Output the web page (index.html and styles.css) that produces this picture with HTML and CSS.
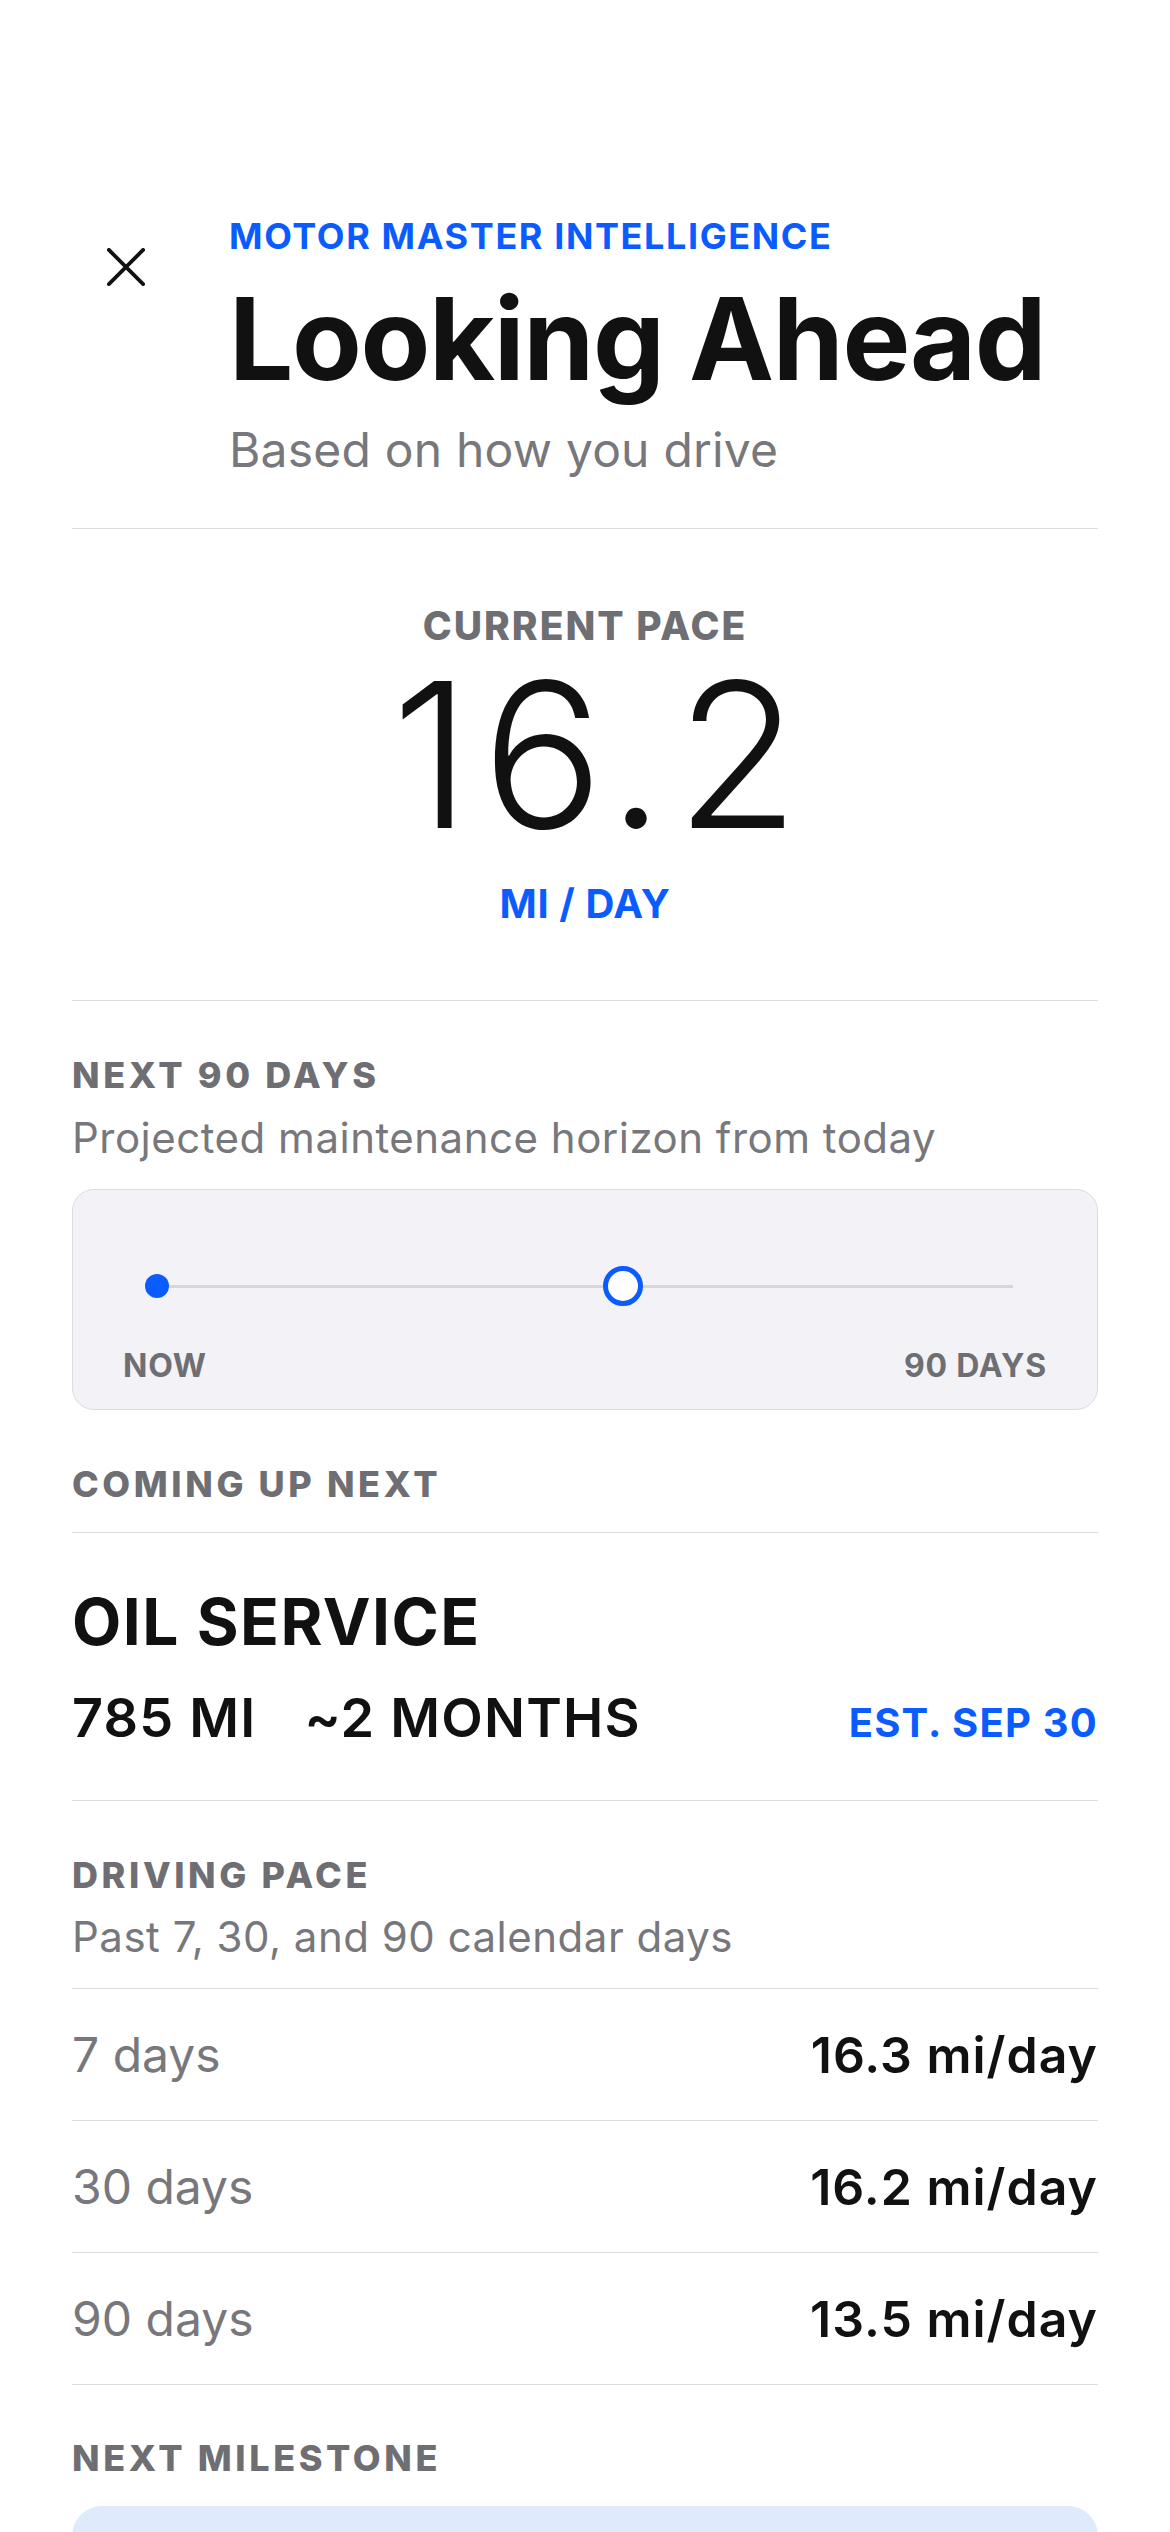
FILE: index.html
```html
<!DOCTYPE html>
<html lang="en">
<head>
<meta charset="utf-8">
<title>Looking Ahead</title>
<link rel="stylesheet" href="styles.css">
</head>
<body>
<main class="screen">
  <header class="hero">
    <button class="close" aria-label="Close">
      <svg viewBox="0 0 40 40" width="40" height="40"><path d="M2 2 L38 38 M38 2 L2 38" stroke="#111" stroke-width="4" stroke-linecap="round" fill="none"/></svg>
    </button>
    <div class="hero-text">
      <div class="eyebrow">MOTOR MASTER INTELLIGENCE</div>
      <h1 class="title">Looking Ahead</h1>
      <p class="subtitle">Based on how you drive</p>
    </div>
  </header>

  <section class="pace">
    <div class="label label-center">CURRENT PACE</div>
    <div class="big-number">16.2</div>
    <div class="unit">MI / DAY</div>
  </section>

  <section class="horizon">
    <div class="label">NEXT 90 DAYS</div>
    <p class="desc">Projected maintenance horizon from today</p>
    <div class="timeline-card">
      <div class="track">
        <span class="dot"></span>
        <span class="ring"></span>
      </div>
      <div class="track-labels">
        <span>NOW</span>
        <span>90 DAYS</span>
      </div>
    </div>
  </section>

  <section class="upnext">
    <div class="label label-ruled">COMING UP NEXT</div>
    <div class="service">
      <h2 class="service-name">OIL SERVICE</h2>
      <div class="service-meta">
        <span class="meta-strong">785 MI</span>
        <span class="meta-strong meta-gap">~2 MONTHS</span>
        <span class="meta-est">EST. SEP 30</span>
      </div>
    </div>
  </section>

  <section class="driving">
    <div class="label">DRIVING PACE</div>
    <p class="desc desc-ruled">Past 7, 30, and 90 calendar days</p>
    <div class="row"><span class="row-key">7 days</span><span class="row-val">16.3 mi/day</span></div>
    <div class="row"><span class="row-key">30 days</span><span class="row-val">16.2 mi/day</span></div>
    <div class="row"><span class="row-key">90 days</span><span class="row-val">13.5 mi/day</span></div>
  </section>

  <section class="milestone">
    <div class="label">NEXT MILESTONE</div>
    <div class="milestone-card"></div>
  </section>
</main>
</body>
</html>
```

FILE: styles.css
```css
* { box-sizing: border-box; }
html, body { margin: 0; padding: 0; background: #fff; }
body {
  font-family: Inter, "Noto Sans", "Liberation Sans", sans-serif;
  color: #111;
  width: 1170px;
  height: 2532px;
  overflow: hidden;
}
.screen { padding: 0 72px; }

/* header */
.hero {
  display: flex;
  align-items: flex-start;
  padding-top: 214px;
  padding-bottom: 49px;
  border-bottom: 1px solid #dcdce0;
}
.close {
  margin: 31px 0 0 32px;
  width: 44px;
  height: 44px;
  padding: 0;
  border: 0;
  background: transparent;
  display: flex;
  align-items: center;
  justify-content: center;
}
.close svg { width: 38px; height: 38px; }
.hero-text { margin-left: 81px; }
.eyebrow {
  font-size: 36px;
  line-height: 44px;
  font-weight: 700;
  color: #0a5cff;
  letter-spacing: 1.6px;
}
.title {
  margin: 16px 0 0;
  font-size: 114px;
  line-height: 130px;
  font-weight: 700;
  letter-spacing: -1.4px;
  color: #111;
}
.subtitle {
  margin: 17px 0 0;
  font-size: 48px;
  line-height: 58px;
  font-weight: 400;
  color: #77777c;
  letter-spacing: 0.2px;
}

/* current pace */
.pace {
  text-align: center;
  padding-top: 78px;
  padding-bottom: 72px;
  border-bottom: 1px solid #dcdce0;
}
.label {
  font-size: 36px;
  line-height: 44px;
  font-weight: 800;
  color: #6e6e73;
  letter-spacing: 3.6px;
}
.label-center { font-size: 39px; line-height: 38px; letter-spacing: 2px; }
.big-number {
  font-size: 202px;
  line-height: 220px;
  font-weight: 300;
  letter-spacing: 11px;
  padding-left: 32px;
  color: #111;
}
.unit {
  margin-top: 15px;
  font-size: 40px;
  line-height: 48px;
  font-weight: 700;
  color: #0a5cff;
  letter-spacing: 0.6px;
}

/* horizon */
.horizon { padding-top: 52px; }
.desc {
  margin: 15px 0 0;
  font-size: 42px;
  line-height: 52px;
  color: #77777c;
  letter-spacing: 0.5px;
}
.timeline-card {
  margin-top: 25px;
  height: 221px;
  background: #f2f2f7;
  border: 1px solid #dcdce0;
  border-radius: 22px;
  padding: 76px 50px 0;
}
.track {
  position: relative;
  height: 40px;
  margin: 0 34px;
}
.track::before {
  content: "";
  position: absolute;
  left: 0;
  right: 0;
  top: 19px;
  height: 3px;
  background: #d6d6db;
}
.dot {
  position: absolute;
  left: -12px;
  top: 8px;
  width: 24px;
  height: 24px;
  border-radius: 50%;
  background: #0a5cff;
}
.ring {
  position: absolute;
  left: 446px;
  top: 0;
  width: 40px;
  height: 40px;
  border-radius: 50%;
  background: #fff;
  border: 5px solid #0a5cff;
}
.track-labels {
  margin-top: 40px;
  display: flex;
  justify-content: space-between;
  font-size: 32px;
  line-height: 40px;
  font-weight: 700;
  color: #6e6e73;
  letter-spacing: 0.8px;
}

/* coming up next */
.upnext { padding-top: 52px; }
.label-ruled {
  padding-bottom: 26px;
  border-bottom: 1px solid #dcdce0;
}
.service {
  padding-top: 51px;
  padding-bottom: 45px;
  border-bottom: 1px solid #dcdce0;
}
.service-name {
  margin: 0;
  font-size: 64px;
  line-height: 76px;
  font-weight: 700;
  color: #111;
  letter-spacing: 1.5px;
}
.service-meta {
  margin-top: 26px;
  display: flex;
  align-items: baseline;
  line-height: 64px;
}
.meta-strong {
  font-size: 54px;
  font-weight: 600;
  color: #111;
  letter-spacing: 1.2px;
}
.meta-gap { margin-left: 48px; }
.meta-est {
  margin-left: auto;
  font-size: 40px;
  font-weight: 700;
  color: #0a5cff;
  letter-spacing: 1.2px;
}

/* driving pace */
.driving { padding-top: 52px; }
.desc-ruled {
  margin-top: 14px;
  padding-bottom: 25px;
  border-bottom: 1px solid #dcdce0;
}
.row {
  display: flex;
  justify-content: space-between;
  align-items: center;
  height: 132px;
  border-bottom: 1px solid #dcdce0;
  font-size: 48px;
}
.row-key { color: #77777c; font-weight: 400; }
.row-val { color: #111; font-weight: 600; font-size: 50px; letter-spacing: 1px; }

/* milestone */
.milestone { padding-top: 51px; }
.milestone-card {
  margin-top: 26px;
  height: 240px;
  background: #dfeafd;
  border-radius: 30px;
}
```
